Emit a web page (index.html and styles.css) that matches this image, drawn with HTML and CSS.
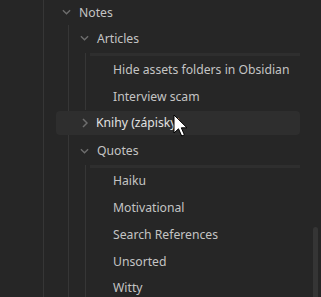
FILE: index.html
```html
<!DOCTYPE html>
<html>
<head>
<meta charset="utf-8">
<link rel="stylesheet" href="styles.css">
</head>
<body>
<div class="pane">
  <div class="tree">
    <div class="row folder lvl1">
      <svg class="chev" viewBox="0 0 10 6"><path d="M1 1 L5 5 L9 1"/></svg>
      <span>Notes</span>
    </div>
    <div class="children c1">
      <div class="row folder lvl2">
        <svg class="chev" viewBox="0 0 10 6"><path d="M1 1 L5 5 L9 1"/></svg>
        <span>Articles</span>
      </div>
      <div class="children c2">
        <div class="band"></div>
        <div class="row file">Hide assets folders in Obsidian</div>
        <div class="row file">Interview scam</div>
      </div>
      <div class="row folder lvl2 hover">
        <svg class="chev right" viewBox="0 0 6 10"><path d="M1 1 L5 5 L1 9"/></svg>
        <span>Knihy (zápisky)</span>
      </div>
      <div class="row folder lvl2 quotes">
        <svg class="chev" viewBox="0 0 10 6"><path d="M1 1 L5 5 L9 1"/></svg>
        <span>Quotes</span>
      </div>
      <div class="children c2">
        <div class="band flush"></div>
        <div class="row file">Haiku</div>
        <div class="row file">Motivational</div>
        <div class="row file">Search References</div>
        <div class="row file">Unsorted</div>
        <div class="row file">Witty</div>
      </div>
    </div>
  </div>
  <div class="scrollbar"></div>
  <svg class="cursor" viewBox="0 0 15 24" width="15" height="24">
    <path d="M1 1 L1 19 L5.5 14.8 L8.7 22 L11.4 20.8 L8.3 13.8 L14 13.8 Z" fill="#fff" stroke="#000" stroke-width="1" stroke-linejoin="miter"/>
  </svg>
</div>
</body>
</html>
```

FILE: styles.css
```css
html, body {
  margin: 0;
  padding: 0;
  background: #262626;
}
.pane {
  position: relative;
  width: 321px;
  height: 297px;
  overflow: hidden;
  background: #262626;
  font-family: "Segoe UI", "Noto Sans", sans-serif;
  font-size: 12.2px;
  color: #c4c4c4;
}
.tree {
  margin-left: 43px;
  margin-top: -1px;
  border-left: 1px solid #363636;
  height: 300px;
  width: 256px;
}
.row {
  display: flex;
  align-items: center;
  height: 26.75px;
  white-space: nowrap;
}
.row.lvl1 {
  height: 26px;
  padding-left: 18px;
}
.chev {
  width: 9px;
  height: 6px;
  fill: none;
  stroke: #6e6e6e;
  stroke-width: 1.5;
  margin-right: 8px;
  flex: none;
}
.chev.right {
  width: 6px;
  height: 10px;
  margin-left: 2px;
  margin-right: 8px;
}
.children.c1 {
  margin-left: 24px;
  border-left: 1px solid #363636;
}
.row.lvl2 {
  height: 26px;
  padding-left: 11px;
}
.children.c2 {
  margin-left: 16px;
  border-left: 1px solid #363636;
}
.band {
  height: 3px;
  margin-top: 2px;
  margin-left: 4px;
  background: #2e2e2e;
}
.band.flush {
  margin-top: 0;
}
.row.file {
  padding-left: 27px;
}
.row.hover {
  height: 24px;
  margin: 1px 0 2px -13px;
  padding-left: 24px;
  background: #2e2e2e;
  border-radius: 4px;
  color: #e2e2e2;
}
.row.quotes {
  height: 28px;
}
.scrollbar {
  position: absolute;
  left: 313px;
  top: 227px;
  width: 5px;
  height: 80px;
  background: #353535;
  border-radius: 3px 3px 0 0;
}
.cursor {
  position: absolute;
  left: 173px;
  top: 114px;
}
```
